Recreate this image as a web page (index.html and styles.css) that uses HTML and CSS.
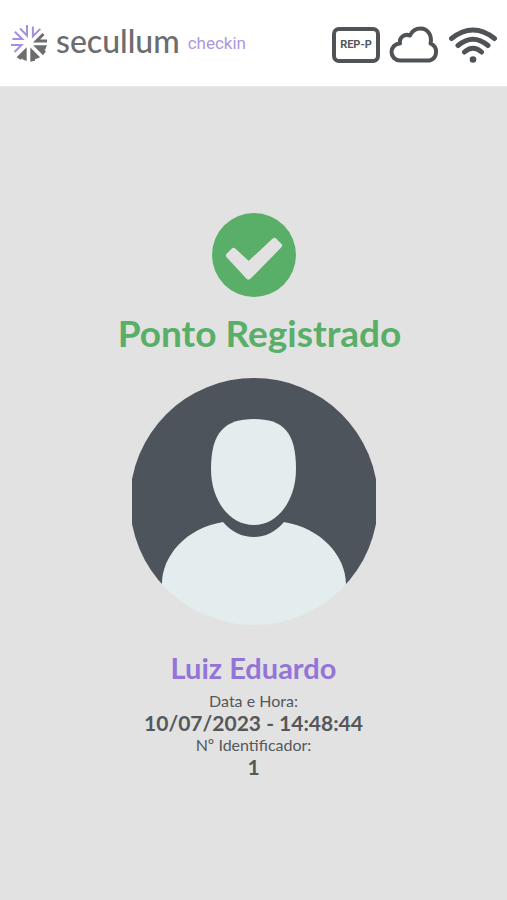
FILE: index.html
```html
<!DOCTYPE html>
<html lang="pt-BR">
<head>
<meta charset="utf-8">
<meta name="viewport" content="width=device-width, initial-scale=1">
<title>Secullum Checkin</title>
<link rel="stylesheet" href="styles.css">
</head>
<body>
<header class="topbar">
  <div class="brand">
    <svg class="brand-mark" viewBox="-19 -19 38 38" aria-hidden="true">
      <defs>
        <path id="ray" d="M18-2H7.500L14.500-9"/>
        <path id="wedge" d="M17.500-2.300H7L14-9.300L15-7L12-5H17Z"/>
      </defs>
      <g class="mark-light">
        <use href="#ray" transform="rotate(180)"/>
        <use href="#ray" transform="rotate(225)"/>
        <use href="#ray" transform="rotate(270)"/>
        <use href="#ray" transform="rotate(315)"/>
      </g>
      <g class="mark-dark">
        <use href="#ray"/>
        <use href="#wedge" transform="rotate(45)"/>
        <use href="#wedge" transform="rotate(90)"/>
        <use href="#wedge" transform="rotate(135)"/>
      </g>
    </svg>
    <span class="brand-name">secullum</span>
    <span class="brand-product">checkin</span>
  </div>
  <div class="status">
    <span class="rep">REP-P</span>
    <svg class="cloud" viewBox="0 0 50 38" role="img" aria-label="Nuvem">
      <path d="M11 34.500A8.500 8.500 0 0 1 11 17.500C10 11 15.500 7.500 21 9.500C23.500 4 27.500 2.500 31.500 2.500C38.500 2.500 43.500 9 41.500 17.500A9 9 0 0 1 40.500 34.500Z"/>
    </svg>
    <svg class="wifi" viewBox="0 0 50 38" role="img" aria-label="Wi-Fi">
      <path d="M3.500 12.500Q25-4.500 46.500 12.500M10 19.500Q25 7 40 19.500M16.500 26Q25 18.500 33.500 26"/>
      <circle cx="25" cy="33.500" r="3.300"/>
    </svg>
  </div>
</header>
<main class="result">
  <svg class="check" viewBox="0 0 84 84" aria-hidden="true">
    <circle cx="42" cy="42" r="42"/>
    <path d="M17 42.500L21.500 38L36.700 52L62.500 28L67 32.500L36.500 63.500Z"/>
  </svg>
  <h1 class="title">Ponto Registrado</h1>
  <svg class="avatar" viewBox="1 0 244 247" role="img" aria-label="Foto do funcionário">
    <defs><clipPath id="face"><ellipse cx="123" cy="123.500" rx="124" ry="123.500"/></clipPath></defs>
    <g clip-path="url(#face)">
      <rect class="avatar-bg" width="246" height="206"/>
      <path class="avatar-fg" d="M123 41C152 41 165 54 165 91C165 122 147 147 123 147C98 147 80 122 80 91C80 54 94 41 123 41Z"/>
      <path class="avatar-fg" d="M92 144Q105 159 123 159Q140 159 153 144C190 150 215 178 215 206V247H31V206C31 178 55 150 92 144Z"/>
    </g>
  </svg>
  <h2 class="name">Luiz Eduardo</h2>
  <dl class="details">
    <dt>Data e Hora:</dt>
    <dd>10/07/2023 - 14:48:44</dd>
    <dt>Nº Identificador:</dt>
    <dd>1</dd>
  </dl>
</main>
</body>
</html>
```
FILE: styles.css
```css
* { box-sizing: border-box; }
body {
  margin: 0;
  min-height: 100vh;
  display: flex;
  flex-direction: column;
  background: #e2e2e2;
  color: #54585b;
  font-family: Lato, "Liberation Sans", sans-serif;
}
.topbar {
  display: flex;
  align-items: center;
  justify-content: space-between;
  height: 87px;
  padding: 0 9px 0 10px;
  background: #fff;
  border-bottom: 1px solid #e8e8e8;
}
.brand, .status { display: flex; align-items: center; }
.brand { gap: 8px; }
.brand-mark { width: 38px; height: 38px; }
.mark-light { fill: none; stroke: #a48fe0; stroke-width: 2; }
.mark-dark { fill: #6b6d6e; stroke: #6b6d6e; stroke-width: 2; }
.mark-dark use:first-child { fill: none; stroke-width: 3; }
.brand-name { padding-bottom: 4px; font-size: 32px; font-weight: 500; line-height: 40px; color: #6b6d6e; }
.brand-product { font: 400 17px/24px Roboto, sans-serif; color: #ab98dc; }
.status { gap: 9px; padding-top: 4px; }
.rep {
  display: flex;
  align-items: center;
  justify-content: center;
  width: 48px;
  height: 36px;
  border: 4px solid #505356;
  border-radius: 7px;
  font: 700 11px/16px Roboto, sans-serif;
}
.cloud, .wifi { width: 50px; height: 38px; fill: none; stroke: #505356; }
.cloud { stroke-width: 4; stroke-linejoin: round; }
.wifi { stroke-width: 5; stroke-linecap: round; }
.wifi circle { fill: #505356; stroke: none; }
.result {
  display: flex;
  flex-direction: column;
  align-items: center;
  padding: 126px 16px 24px;
}
.check { width: 84px; height: 84px; fill: #59ae68; }
.check path { fill: #e2e2e2; stroke: #e2e2e2; stroke-width: 6; stroke-linejoin: round; }
.title {
  margin: 12px 0 21px;
  padding-left: 12px;
  font-size: 37px;
  line-height: 48px;
  color: #59ae68;
}
.avatar { width: 244px; height: 247px; }
.avatar-bg { fill: #4e545b; }
.avatar-fg { fill: #e3edee; }
.name { margin: 25px 0 5px; font-size: 29px; line-height: 36px; color: #9374d8; }
.details { margin: 0; text-align: center; }
.details dt { font-size: 16px; line-height: 20px; }
.details dd { margin: 0; font-size: 21px; line-height: 24px; font-weight: 700; }
```
